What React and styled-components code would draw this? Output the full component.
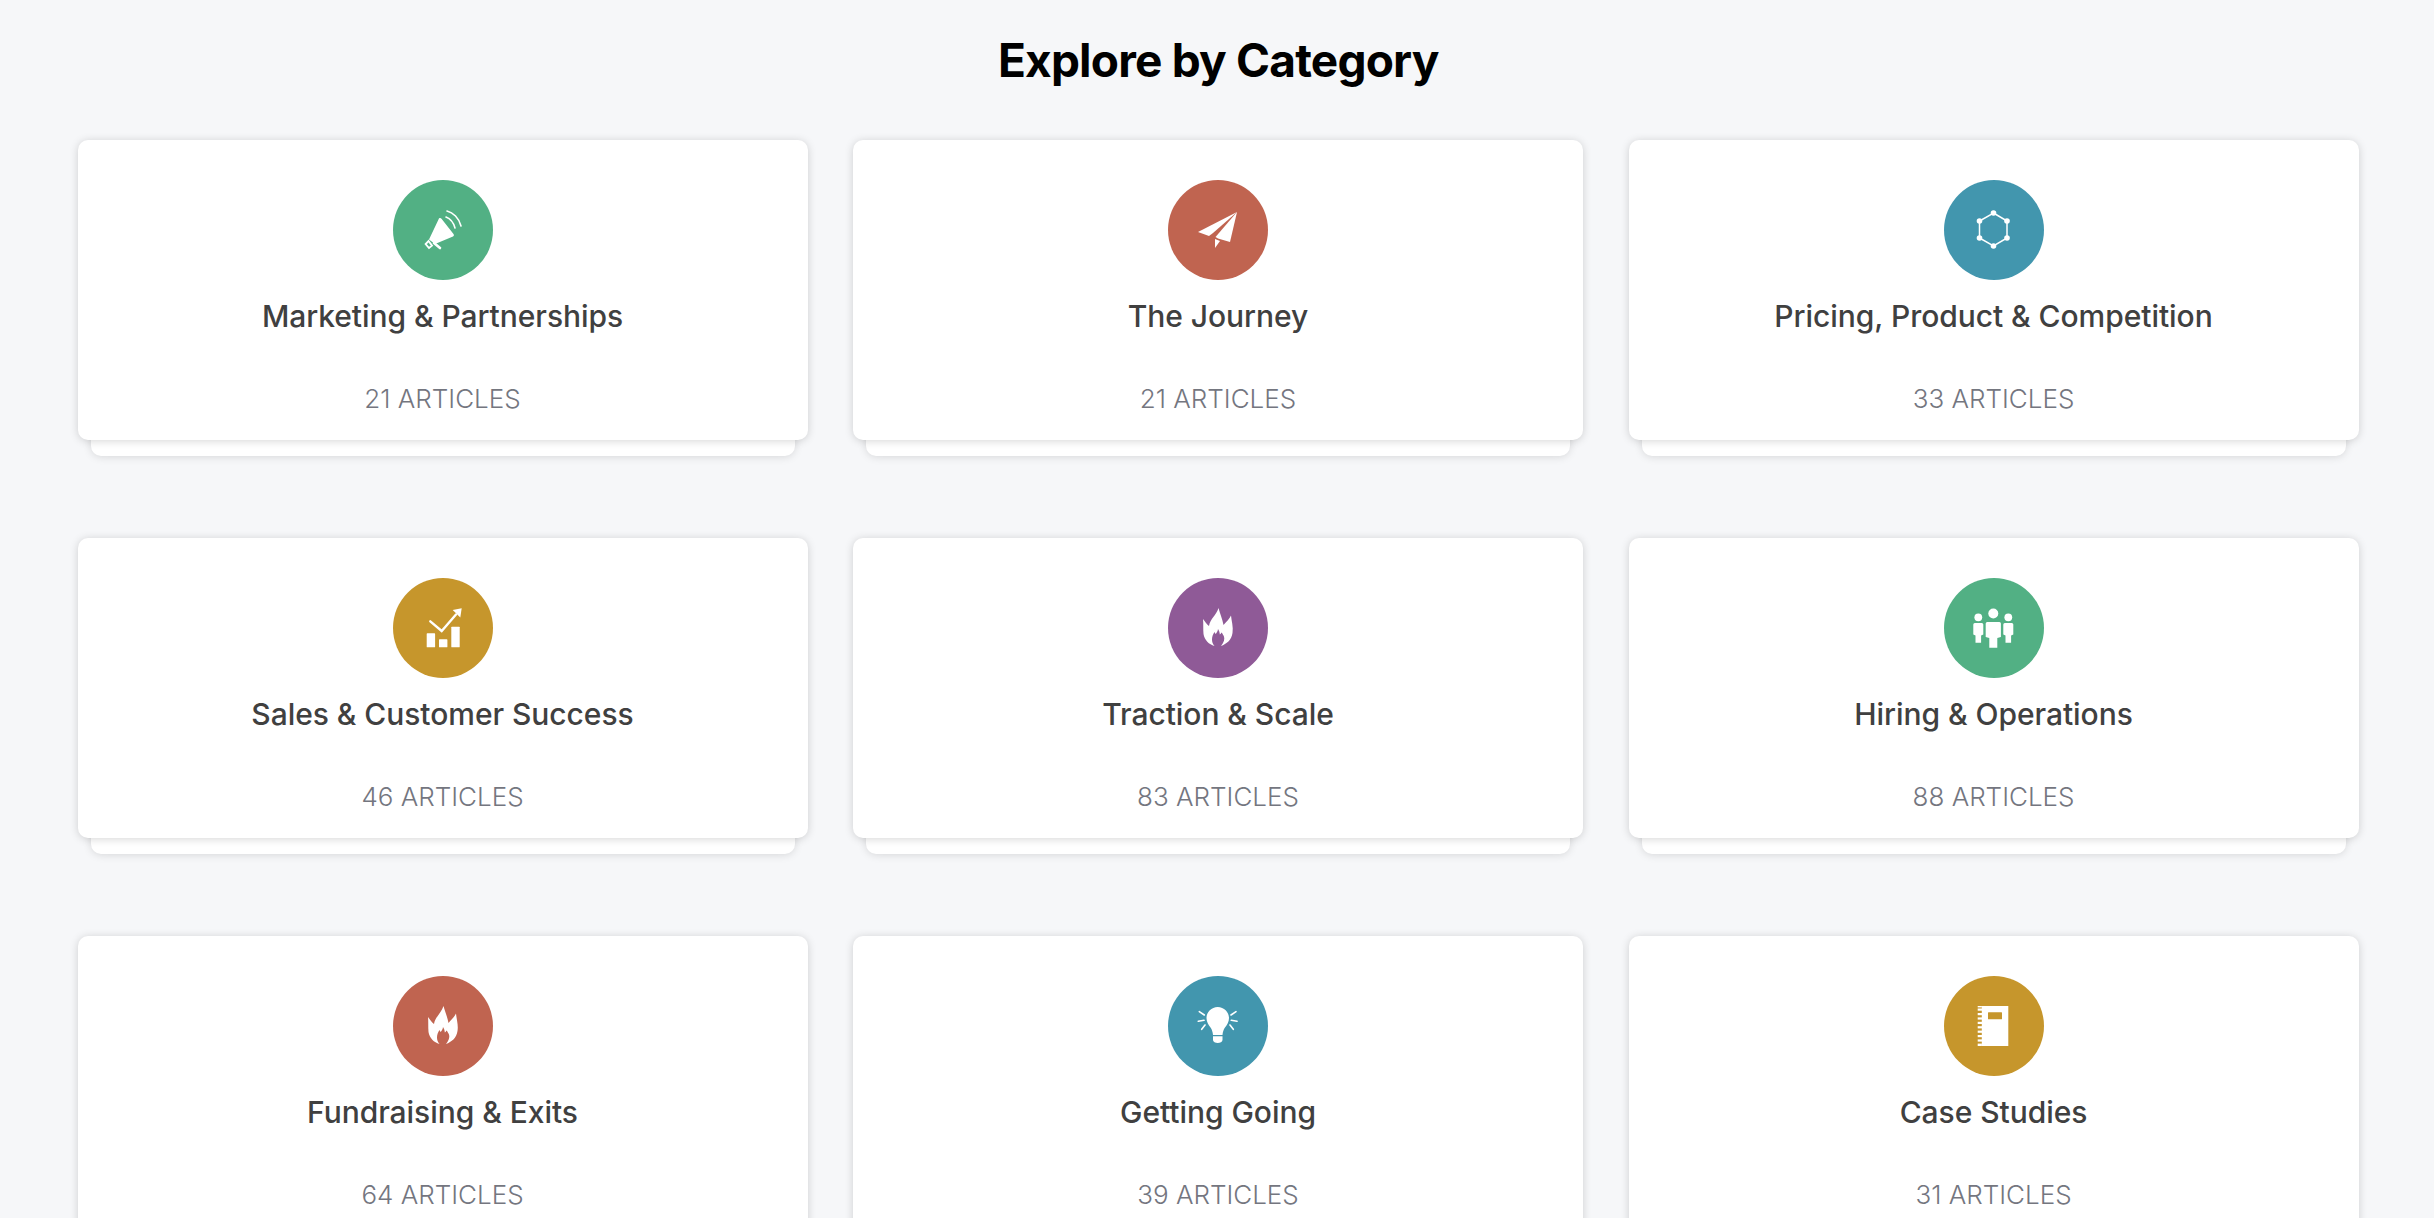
import styled, { createGlobalStyle } from 'styled-components';

const GlobalStyle = createGlobalStyle`
  html, body {
    margin: 0;
    height: 100%;
    overflow: hidden;
    background: #f6f7f9;
  }
`;

const GREEN = '#52b084';
const RED = '#c06450';
const BLUE = '#4296ae';
const GOLD = '#c6962c';
const PURPLE = '#8f5a97';

const Megaphone = () => (
  <>
    <path d="M45.5 39.5 C46 38 47.5 37.6 48.5 38.8 L60.5 54 C61.2 55 61 56 60 56.6 L42 64 L36 59.5 Z" fill="#fff" />
    <path d="M35.6 61 L39 65.6 L36 68 L32.6 64 Z" fill="none" stroke="#fff" strokeWidth="1.8" />
    <path d="M41 63 L47 68" stroke="#fff" strokeWidth="2.6" strokeLinecap="round" />
    <path d="M54 31 C60 32.5 66 38 68 46" fill="none" stroke="#fff" strokeWidth="1.6" strokeLinecap="round" />
    <path d="M53 37 C57 38.5 60.5 42.5 62 48" fill="none" stroke="#fff" strokeWidth="1.6" strokeLinecap="round" />
  </>
);

const Plane = () => (
  <>
    <path d="M30 52 L69 32 L45 53 L41 56 Z" fill="#fff" />
    <path d="M69 32 L62 62 L50 58.5 L47.5 57 Z" fill="#fff" />
    <path d="M47 59 L52 61 L47 68 Z" fill="#fff" />
  </>
);

const Hexagon = () => {
  const pts = [[49.5, 33], [63, 41], [63, 58], [49.5, 66], [35.5, 58], [35.5, 41]];
  return (
    <>
      <polygon points={pts.map(p => p.join(',')).join(' ')} fill="none" stroke="#fff" strokeWidth="1.5" />
      {pts.map((p, i) => (
        <circle key={i} cx={p[0]} cy={p[1]} r="2.8" fill="#fff" />
      ))}
    </>
  );
};

const Chart = () => (
  <>
    <rect x="33.7" y="55.3" width="8.4" height="14" rx="0.6" fill="#fff" />
    <rect x="46" y="61.3" width="8.4" height="8" rx="0.6" fill="#fff" />
    <rect x="58.3" y="48.7" width="8.4" height="20.6" rx="0.6" fill="#fff" />
    <path d="M37.3 43.3 L48.7 53 L63 36.5" fill="none" stroke="#fff" strokeWidth="2.4" strokeLinecap="round" />
    <path d="M68.7 30.3 L59.7 32 L67.3 39.6 Z" fill="#fff" />
  </>
);

const Flame = () => (
  <path
    d="M50.5 30 C52 36 54.5 41 55.5 47 C58 44 61.5 41 63 37.5 C63.5 43 65.5 49 64.5 55 C63.5 62 58.5 66 53 68 C56 64 57 61 55.8 58 C55 56.5 54.2 55 53.5 54.5 C53 55.5 52.5 56 51.8 56.5 C51.8 54.5 51 52.5 50 51 C49.8 53.5 48.5 55 47.5 56 C47 55 46.7 54.5 46.5 54 C45 56 44 59 44 61.5 C44 64 44.8 66 46.5 68 C41 66.5 36.5 62 35.5 56 C35 51 35.5 46 35 41 C37 43.5 39 46.5 41 48 C42 41 48.5 37 50.5 30 Z"
    fill="#fff"
  />
);

const Person = ({ x, headY, headR, w, top, legW, waist, bottom }) => (
  <>
    <circle cx={x} cy={headY} r={headR} fill="#fff" />
    <path
      d={`M${x - w + 1.5} ${top} H${x + w - 1.5} Q${x + w} ${top} ${x + w} ${top + 1.5} V${waist} L${x + legW} ${waist + 1} V${bottom} H${x - legW} V${waist + 1} L${x - w} ${waist} V${top + 1.5} Q${x - w} ${top} ${x - w + 1.5} ${top} Z`}
      fill="#fff"
    />
  </>
);

const People = () => (
  <>
    <Person x={34.3} headY={39.3} headR={3.9} w={5} top={45} legW={2.8} waist={56.5} bottom={64.7} />
    <Person x={64.3} headY={39.3} headR={3.9} w={5} top={45} legW={2.8} waist={56.5} bottom={64.7} />
    <Person x={49.3} headY={35.5} headR={5} w={7.6} top={44} legW={4} waist={59} bottom={69.7} />
  </>
);

const Bulb = () => (
  <>
    <path d="M49.7 31 C56 31 61 36 61 42 C61 46 59 49 57 51.5 C55.5 53.5 54.8 56 54.5 59 H45 C44.7 56 44 53.5 42.5 51.5 C40.5 49 38.5 46 38.5 42 C38.5 36 43.5 31 49.7 31 Z" fill="#fff" />
    <path d="M45 60.3 H54.5 V64 C54.5 66 52 67 49.7 67 C47.5 67 45 66 45 64 Z" fill="#fff" />
    <path
      d="M31.3 35.7 L36.3 39 M30.3 45.3 L36 44.3 M33.7 53.3 L37 49 M68 35.7 L63 39 M69 45.3 L63.3 44.3 M65.3 53.3 L62 49"
      stroke="#fff"
      strokeWidth="1.6"
      strokeLinecap="round"
    />
  </>
);

const Notebook = () => (
  <>
    <rect x="37.8" y="30" width="26.5" height="40" fill="#fff" />
    {[32.5, 37, 41.4, 45.8, 50.2, 54.6, 59, 63.4].map(y => (
      <rect key={y} x="33.7" y={y} width="5" height="2.2" fill="#fff" />
    ))}
    <rect x="33.7" y="30" width="4.2" height="1.4" fill="#fff" />
    <rect x="33.7" y="67.6" width="4.2" height="2.4" fill="#fff" />
    <rect x="44" y="36.3" width="14" height="7" rx="0.5" fill={GOLD} />
  </>
);

const categories = [
  { name: 'Marketing & Partnerships', count: 21, color: GREEN, icon: <Megaphone /> },
  { name: 'The Journey', count: 21, color: RED, icon: <Plane /> },
  { name: 'Pricing, Product & Competition', count: 33, color: BLUE, icon: <Hexagon /> },
  { name: 'Sales & Customer Success', count: 46, color: GOLD, icon: <Chart /> },
  { name: 'Traction & Scale', count: 83, color: PURPLE, icon: <Flame /> },
  { name: 'Hiring & Operations', count: 88, color: GREEN, icon: <People /> },
  { name: 'Fundraising & Exits', count: 64, color: RED, icon: <Flame /> },
  { name: 'Getting Going', count: 39, color: BLUE, icon: <Bulb /> },
  { name: 'Case Studies', count: 31, color: GOLD, icon: <Notebook /> },
];

const App = () => {
  return (
    <Page>
      <GlobalStyle />
      <Heading>Explore by Category</Heading>
      <Grid>
        {categories.map(cat => (
          <Card key={cat.name}>
            <IconCircle $color={cat.color}>
              <svg viewBox="0 0 100 100" width="100" height="100">
                {cat.icon}
              </svg>
            </IconCircle>
            <Title>{cat.name}</Title>
            <Count>{cat.count} ARTICLES</Count>
          </Card>
        ))}
      </Grid>
    </Page>
  );
};

export default App;

const Page = styled.div`
  box-sizing: border-box;
  height: 100vh;
  overflow: hidden;
  isolation: isolate;
  padding: 32px 75px 0 77.5px;
  background: #f6f7f9;
  font-family: "Inter", "Liberation Sans", sans-serif;
`;

const Heading = styled.h1`
  margin: 0 0 52px;
  font-size: 46px;
  line-height: 56px;
  font-weight: 700;
  letter-spacing: -0.8px;
  text-align: center;
  color: #000;
`;

const Grid = styled.div`
  display: grid;
  grid-template-columns: repeat(3, 730px);
  column-gap: 45.5px;
  row-gap: 98px;
`;

const Card = styled.div`
  position: relative;
  box-sizing: border-box;
  height: 300px;
  padding-top: 40px;
  display: flex;
  flex-direction: column;
  align-items: center;
  background: #fff;
  border-radius: 10px;
  box-shadow: 0 1px 8px rgba(0, 0, 0, 0.17);

  &::after {
    content: "";
    position: absolute;
    left: 13px;
    right: 13px;
    bottom: -16px;
    height: 30px;
    z-index: -1;
    background: #fff;
    border-radius: 0 0 10px 10px;
    box-shadow: 0 1px 8px rgba(0, 0, 0, 0.13);
  }
`;

const IconCircle = styled.div`
  width: 100px;
  height: 100px;
  flex: none;
  border-radius: 50%;
  background: ${props => props.$color};
`;

const Title = styled.div`
  margin-top: 16px;
  font-size: 30px;
  line-height: 40px;
  font-weight: 500;
  letter-spacing: -0.05px;
  color: #404040;
`;

const Count = styled.div`
  margin-top: 43px;
  font-size: 26px;
  line-height: 40px;
  font-weight: 300;
  color: #74767f;
`;
